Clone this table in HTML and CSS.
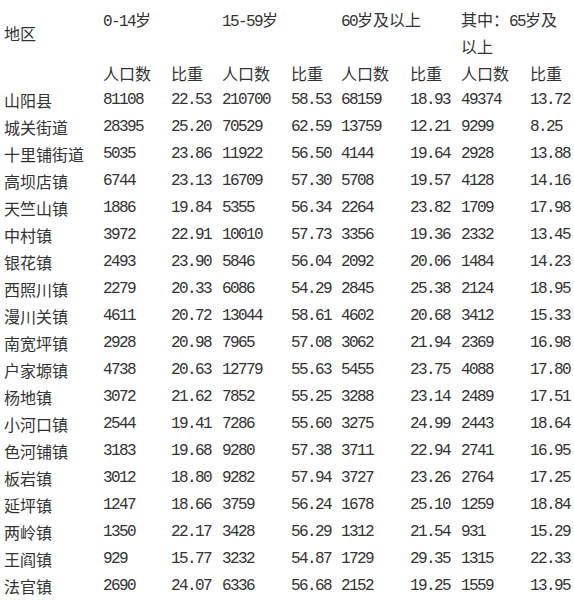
FILE: index.html
```html
<!DOCTYPE html>
<html lang="zh">
<head>
<meta charset="utf-8">
<title>山阳县人口年龄构成</title>
<link rel="stylesheet" href="styles.css">
</head>
<body>
<table class="pop">
<colgroup>
<col class="c-area"><col class="c-a"><col class="c-b"><col class="c-a2"><col class="c-b2"><col class="c-a2"><col class="c-b"><col class="c-a2"><col class="c-last">
</colgroup>
<thead>
<tr>
<th class="area">地区</th>
<th colspan="2" class="grp"><span class="d">0-14</span>岁</th>
<th colspan="2" class="grp"><span class="d">15-59</span>岁</th>
<th colspan="2" class="grp"><span class="d">60</span>岁及以上</th>
<th colspan="2" class="grp">其中：<span class="d">65</span>岁及<br>以上</th>
</tr>
<tr>
<th></th>
<th>人口数</th><th>比重</th><th>人口数</th><th>比重</th><th>人口数</th><th>比重</th><th>人口数</th><th>比重</th>
</tr>
</thead>
<tbody>
<tr><td>山阳县</td><td class="n">81108</td><td class="n">22.53</td><td class="n">210700</td><td class="n">58.53</td><td class="n">68159</td><td class="n">18.93</td><td class="n">49374</td><td class="n">13.72</td></tr>
<tr><td>城关街道</td><td class="n">28395</td><td class="n">25.20</td><td class="n">70529</td><td class="n">62.59</td><td class="n">13759</td><td class="n">12.21</td><td class="n">9299</td><td class="n">8.25</td></tr>
<tr><td>十里铺街道</td><td class="n">5035</td><td class="n">23.86</td><td class="n">11922</td><td class="n">56.50</td><td class="n">4144</td><td class="n">19.64</td><td class="n">2928</td><td class="n">13.88</td></tr>
<tr><td>高坝店镇</td><td class="n">6744</td><td class="n">23.13</td><td class="n">16709</td><td class="n">57.30</td><td class="n">5708</td><td class="n">19.57</td><td class="n">4128</td><td class="n">14.16</td></tr>
<tr><td>天竺山镇</td><td class="n">1886</td><td class="n">19.84</td><td class="n">5355</td><td class="n">56.34</td><td class="n">2264</td><td class="n">23.82</td><td class="n">1709</td><td class="n">17.98</td></tr>
<tr><td>中村镇</td><td class="n">3972</td><td class="n">22.91</td><td class="n">10010</td><td class="n">57.73</td><td class="n">3356</td><td class="n">19.36</td><td class="n">2332</td><td class="n">13.45</td></tr>
<tr><td>银花镇</td><td class="n">2493</td><td class="n">23.90</td><td class="n">5846</td><td class="n">56.04</td><td class="n">2092</td><td class="n">20.06</td><td class="n">1484</td><td class="n">14.23</td></tr>
<tr><td>西照川镇</td><td class="n">2279</td><td class="n">20.33</td><td class="n">6086</td><td class="n">54.29</td><td class="n">2845</td><td class="n">25.38</td><td class="n">2124</td><td class="n">18.95</td></tr>
<tr><td>漫川关镇</td><td class="n">4611</td><td class="n">20.72</td><td class="n">13044</td><td class="n">58.61</td><td class="n">4602</td><td class="n">20.68</td><td class="n">3412</td><td class="n">15.33</td></tr>
<tr><td>南宽坪镇</td><td class="n">2928</td><td class="n">20.98</td><td class="n">7965</td><td class="n">57.08</td><td class="n">3062</td><td class="n">21.94</td><td class="n">2369</td><td class="n">16.98</td></tr>
<tr><td>户家塬镇</td><td class="n">4738</td><td class="n">20.63</td><td class="n">12779</td><td class="n">55.63</td><td class="n">5455</td><td class="n">23.75</td><td class="n">4088</td><td class="n">17.80</td></tr>
<tr><td>杨地镇</td><td class="n">3072</td><td class="n">21.62</td><td class="n">7852</td><td class="n">55.25</td><td class="n">3288</td><td class="n">23.14</td><td class="n">2489</td><td class="n">17.51</td></tr>
<tr><td>小河口镇</td><td class="n">2544</td><td class="n">19.41</td><td class="n">7286</td><td class="n">55.60</td><td class="n">3275</td><td class="n">24.99</td><td class="n">2443</td><td class="n">18.64</td></tr>
<tr><td>色河铺镇</td><td class="n">3183</td><td class="n">19.68</td><td class="n">9280</td><td class="n">57.38</td><td class="n">3711</td><td class="n">22.94</td><td class="n">2741</td><td class="n">16.95</td></tr>
<tr><td>板岩镇</td><td class="n">3012</td><td class="n">18.80</td><td class="n">9282</td><td class="n">57.94</td><td class="n">3727</td><td class="n">23.26</td><td class="n">2764</td><td class="n">17.25</td></tr>
<tr><td>延坪镇</td><td class="n">1247</td><td class="n">18.66</td><td class="n">3759</td><td class="n">56.24</td><td class="n">1678</td><td class="n">25.10</td><td class="n">1259</td><td class="n">18.84</td></tr>
<tr><td>两岭镇</td><td class="n">1350</td><td class="n">22.17</td><td class="n">3428</td><td class="n">56.29</td><td class="n">1312</td><td class="n">21.54</td><td class="n">931</td><td class="n">15.29</td></tr>
<tr><td>王阎镇</td><td class="n">929</td><td class="n">15.77</td><td class="n">3232</td><td class="n">54.87</td><td class="n">1729</td><td class="n">29.35</td><td class="n">1315</td><td class="n">22.33</td></tr>
<tr><td>法官镇</td><td class="n">2690</td><td class="n">24.07</td><td class="n">6336</td><td class="n">56.68</td><td class="n">2152</td><td class="n">19.25</td><td class="n">1559</td><td class="n">13.95</td></tr>
</tbody>
</table>
</body>
</html>
```

FILE: styles.css
```css
html, body {
  margin: 0;
  padding: 0;
  background: #ffffff;
}

body {
  padding: 6px 0 0 4px;
  color: #333333;
  font-family: "Noto Sans CJK SC", "Noto Sans", sans-serif;
  font-size: 16px;
  line-height: 27px;
}

.pop {
  border-collapse: collapse;
  table-layout: fixed;
  width: 570px;
}

.c-area { width: 99px; }
.c-a { width: 68px; }
.c-a2 { width: 69px; }
.c-b { width: 51px; }
.c-b2 { width: 50px; }
.c-last { width: 44px; }

.pop th,
.pop td {
  padding: 0;
  height: 27px;
  text-align: left;
  font-weight: normal;
  white-space: nowrap;
  vertical-align: middle;
}

.pop th.grp {
  vertical-align: top;
}

.pop td.n,
.d {
  font-family: "Liberation Mono", "DejaVu Sans Mono", monospace;
  letter-spacing: -1.6px;
}

.d {
  line-height: 16px;
}
```
